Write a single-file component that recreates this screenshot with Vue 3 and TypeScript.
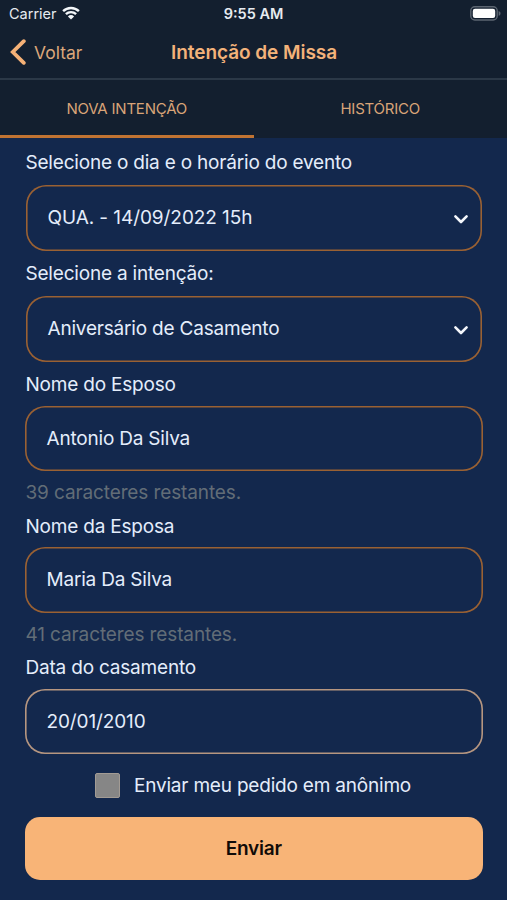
<script setup lang="ts">
import { ref } from 'vue'

interface Field {
  id: string
  kind: 'select' | 'text' | 'date'
  label: string
  value: string
  hint?: string
}

const tabs = ['NOVA INTENÇÃO', 'HISTÓRICO']
const activeTab = ref(0)
const anonymous = ref(false)

const fields: Field[] = [
  { id: 'evento', kind: 'select', label: 'Selecione o dia e o horário do evento', value: 'QUA. - 14/09/2022 15h' },
  { id: 'intencao', kind: 'select', label: 'Selecione a intenção:', value: 'Aniversário de Casamento' },
  { id: 'esposo', kind: 'text', label: 'Nome do Esposo', value: 'Antonio Da Silva', hint: '39 caracteres restantes.' },
  { id: 'esposa', kind: 'text', label: 'Nome da Esposa', value: 'Maria Da Silva', hint: '41 caracteres restantes.' },
  { id: 'data', kind: 'date', label: 'Data do casamento', value: '20/01/2010' },
]
</script>

<template>
  <div class="screen">
    <header class="header">
      <div class="status">
        <div class="carrier">
          <span>Carrier</span>
          <svg class="wifi" viewBox="0 0 18 14" width="18" height="14">
            <path d="M1.1 5.2a11.4 11.4 0 0 1 15.8 0" />
            <path d="M3.9 8.2a7.4 7.4 0 0 1 10.2 0" />
            <path class="dot" d="M9 13.6 5.9 10.5a4.5 4.5 0 0 1 6.2 0z" />
          </svg>
        </div>
        <span class="time">9:55 AM</span>
        <svg class="battery" viewBox="0 0 31 15" width="31" height="15">
          <rect class="case" x="0.8" y="0.8" width="26.4" height="13.2" rx="4" />
          <rect class="charge" x="2.8" y="2.8" width="22.4" height="9.2" rx="2.2" />
          <path class="cap" d="M28.6 5c1.3.4 1.9 1.3 1.9 2.4s-.6 2-1.9 2.4z" />
        </svg>
      </div>
      <nav class="nav">
        <button class="back" type="button">
          <svg viewBox="0 0 17 26" width="17" height="26"><path d="M14.8 2.2 3.8 13l11 10.8" /></svg>
          <span>Voltar</span>
        </button>
        <h1 class="title">Intenção de Missa</h1>
      </nav>
      <div class="tabs">
        <button
          v-for="(tab, i) in tabs"
          :key="tab"
          type="button"
          :class="['tab', { active: i === activeTab }]"
          @click="activeTab = i"
        >
          {{ tab }}
        </button>
      </div>
    </header>

    <main class="form">
      <section v-for="field in fields" :key="field.id" :class="['field', field.kind, field.id]">
        <div class="label">{{ field.label }}</div>
        <div class="control">
          <span>{{ field.value }}</span>
          <svg v-if="field.kind === 'select'" viewBox="0 0 16 11" width="16" height="11">
            <path d="M2.4 2.4l5.6 5.6 5.6-5.6" />
          </svg>
        </div>
        <div v-if="field.hint" class="hint">{{ field.hint }}</div>
      </section>

      <div class="anonymous" @click="anonymous = !anonymous">
        <span :class="['checkbox', { checked: anonymous }]"></span>
        <span>Enviar meu pedido em anônimo</span>
      </div>
      <button class="submit" type="button">Enviar</button>
    </main>
  </div>
</template>

<style>
body {
  margin: 0;
  background: #13284d;
}
</style>

<style scoped>
.screen {
  box-sizing: border-box;
  width: 507px;
  height: 900px;
  overflow: hidden;
  background: #13284d;
  color: #e4edfb;
  font-family: Inter, 'Liberation Sans', sans-serif;
  font-size: 19px;
}
button {
  padding: 0;
  border: 0;
  background: none;
  color: inherit;
  font: inherit;
  letter-spacing: inherit;
}
.header {
  height: 138px;
  background: #131f2f;
  color: #f3b27a;
}
.status {
  display: grid;
  grid-template-columns: 1fr auto 1fr;
  align-items: center;
  height: 27px;
  padding: 0 6px 0 9px;
  color: #e6ebf0;
  font-size: 14.5px;
}
.carrier {
  display: flex;
  align-items: center;
  gap: 5.5px;
  margin-top: -1px;
}
.carrier span {
  margin-top: 1px;
}
.wifi {
  fill: none;
  stroke: #f4f7fa;
  stroke-width: 2.4;
}
.wifi .dot {
  fill: #f4f7fa;
  stroke: none;
}
.time {
  margin-right: 3px;
  font-weight: 600;
}
.battery {
  justify-self: end;
  margin-top: -1px;
}
.case {
  fill: none;
  stroke: #5c6571;
  stroke-width: 1.4;
}
.charge {
  fill: #fff;
}
.cap {
  fill: #5c6571;
}
.nav {
  display: grid;
  grid-template-columns: 1fr auto 1fr;
  align-items: center;
  height: 51px;
  border-bottom: 2px solid #2b3847;
  padding: 0 9px;
}
.back {
  display: flex;
  align-items: center;
  gap: 8px;
  margin-top: -1px;
  font-size: 17.5px;
  color: #dca77b;
}
.back svg {
  fill: none;
  stroke: #f5b177;
  stroke-width: 3.8;
  stroke-linecap: round;
}
.title {
  margin: 0 0 0 1px;
  font-size: 19px;
  font-weight: 600;
  letter-spacing: -0.05px;
}
.tabs {
  display: grid;
  grid-template-columns: 1fr 1fr;
  height: 58px;
  font-size: 15px;
  letter-spacing: -0.22px;
  color: #d9a478;
}
.tab {
  box-sizing: border-box;
  height: 58px;
  padding-top: 1px;
  border-bottom: 3px solid transparent;
}
.tab.active {
  border-bottom-color: #c07332;
}
.form {
  padding: 2px 24.5px 0 25px;
  letter-spacing: -0.2px;
}
.label {
  height: 45px;
  padding-left: 0.5px;
  line-height: 45px;
}
.control {
  box-sizing: border-box;
  display: flex;
  align-items: center;
  justify-content: space-between;
  height: 65.5px;
  padding: 0 21.5px;
  border-radius: 20px;
  box-shadow: inset 0 0 0 1.6px #9a6133;
}
.select .control {
  height: 65.5px;
  margin: 0 1px 0.5px;
  padding-right: 13px;
}
.evento .control {
  letter-spacing: -0.07px;
}
.text .label,
.date .label {
  height: 43.5px;
}
.date .control {
  letter-spacing: -0.12px;
  box-shadow: inset 0 0 0 1.6px #b69680;
}
.control svg {
  margin-top: 4px;
  fill: none;
  stroke: #f4f7fc;
  stroke-width: 2.6;
  stroke-linecap: round;
  stroke-linejoin: round;
}
.hint {
  height: 32.5px;
  padding-left: 0.5px;
  line-height: 43px;
  letter-spacing: -0.12px;
  color: #626d77;
}
.anonymous {
  display: flex;
  align-items: center;
  gap: 14px;
  height: 63px;
  padding-left: 70px;
}
.checkbox {
  box-sizing: border-box;
  width: 25px;
  height: 25px;
  border: 1px solid #a29b94;
  border-radius: 2px;
  background: #868686;
}
.checkbox.checked {
  background: #f8b477;
}
.submit {
  display: block;
  width: 100%;
  height: 63px;
  border-radius: 15px;
  background: #f8b477;
  color: #100b08;
  font-weight: 600;
}
</style>
